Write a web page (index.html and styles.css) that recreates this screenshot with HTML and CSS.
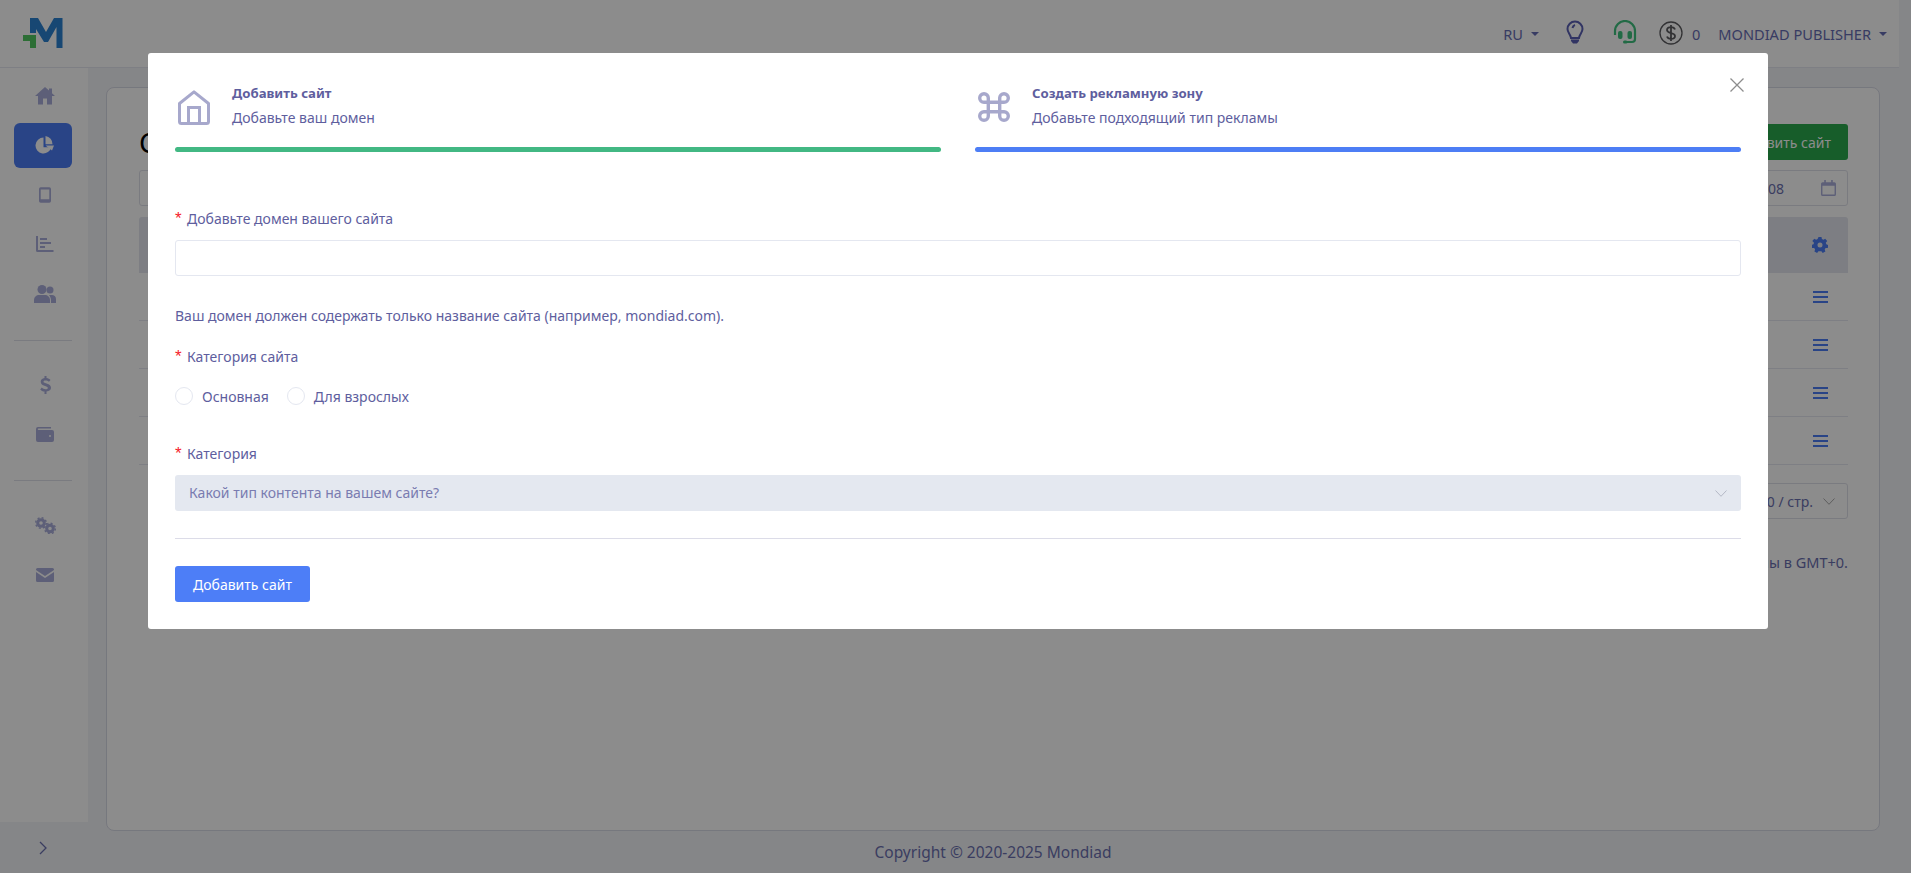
FILE: index.html
```html
<!DOCTYPE html>
<html lang="ru">
<head>
<meta charset="utf-8">
<title>Mondiad</title>
<link rel="stylesheet" href="styles.css">
</head>
<body>
<div class="app">
  <header class="topbar">
    <svg class="logo" viewBox="0 0 40 31" width="40" height="31">
      <path class="logo-m" d="M7 0h8l8 14 8-14h8.500v30h-6V9L25 24h-4L13 11v4H7z"/>
      <path class="logo-plus" d="M0 17h13v13H7v-7H0z"/>
    </svg>
    <div class="top-actions">
      <span class="top-item">RU<i class="caret"></i></span>
      <svg class="top-icon bulb" viewBox="0 0 18 24" width="18" height="24"><path d="M9 1.500a7.500 7.500 0 0 0-7.500 7.500c0 3.500 3 5 3.500 9h8c.5-4 3.500-5.500 3.500-9A7.500 7.500 0 0 0 9 1.500zM9 5a4 4 0 0 0-2.500 3" fill="none" stroke="currentColor" stroke-width="2"/><path d="M5 19.500h8v1.500l-2 2.500H7L5 21z" fill="currentColor"/></svg>
      <svg class="top-icon headset" viewBox="0 0 24 24" width="24" height="24"><path d="M2 15V11a10 10 0 0 1 20 0v8c0 2-1.500 3-3 3h-6" fill="none" stroke="currentColor" stroke-width="2.200"/><rect x="5" y="11" width="4.500" height="8" rx="2" fill="currentColor"/><rect x="14.500" y="11" width="4.500" height="8" rx="2" fill="currentColor"/><rect x="10" y="20.500" width="4.500" height="3" rx="1.500" fill="currentColor"/></svg>
      <span class="balance">
        <svg class="coin" viewBox="0 0 24 24" width="24" height="24"><circle cx="12" cy="12" r="11" fill="none" stroke="currentColor" stroke-width="1.300"/><path d="M16 8.500c-.5-1.500-2-2.300-4-2.300-2.300 0-4 1.100-4 2.900 0 4 8 2 8 5.800 0 1.800-1.700 2.900-4 2.900-2 0-3.500-.8-4-2.300M12 4v16" fill="none" stroke="currentColor" stroke-width="1.800"/></svg>
        0
      </span>
      <span class="top-item user">MONDIAD PUBLISHER<i class="caret"></i></span>
    </div>
  </header>
  <div class="below">
    <aside class="sidebar">
      <nav class="side-nav">
        <a class="side-link"><svg viewBox="0 0 20 18" width="20" height="18"><path d="M10 0L0 9h3v8.500h5V11.500h4v6h5V9h3l-3-2.700V1.500h-3v2.100z"/></svg></a>
        <a class="side-link active"><svg viewBox="0 0 20 18" width="20" height="18"><path d="M8.500 1.500a8 8 0 1 0 7.800 9.800H8.500z"/><path d="M10.500 0v8.200l7 0A8 8 0 0 0 10.500 0z"/><path d="M10.500 9.500h8.500l-2 5z"/></svg></a>
        <a class="side-link"><svg viewBox="0 0 14 18" width="12" height="16"><path fill-rule="evenodd" d="M2 0h10a2 2 0 0 1 2 2v14a2 2 0 0 1-2 2H2a2 2 0 0 1-2-2V2a2 2 0 0 1 2-2zm0 2.500v11.500h10V2.500z"/></svg></a>
        <a class="side-link"><svg viewBox="0 0 18 16" width="18" height="16"><path d="M0 0h2v14h15.500v2H1.500A1.500 1.500 0 0 1 0 14.500zM4 2h7v2H4zM4 6h11v2H4zM4 10h5v2H4z"/></svg></a>
        <a class="side-link"><svg viewBox="0 0 22 18" width="22" height="18"><circle cx="8" cy="4.500" r="4.500"/><circle cx="16" cy="5" r="3.500"/><path d="M0 18v-3c0-3 2.500-5 5-5h6c2.500 0 5 2 5 5v3z"/><path d="M17 18v-3c0-2-.8-3.500-2-4.800 .5-.2 1-.2 2-.2h1c2 0 4 1.500 4 4v4z"/></svg></a>
        <hr class="side-rule">
        <a class="side-link"><svg viewBox="0 0 11 18" width="11" height="18"><path d="M6.500 0v2c1.800.2 3.200 1 4 2l-1.500 1.800c-1-.8-2.200-1.300-3.500-1.300-1.200 0-2 .5-2 1.300 0 2 7.500 1.200 7.500 6 0 2-1.600 3.400-4.500 3.700V18h-2v-2.400c-1.800-.2-3.300-1-4.300-2.200l1.600-1.800c1 1 2.300 1.700 3.700 1.700 1.500 0 2.300-.6 2.300-1.400C8.300 9.600.7 10.500.7 5.700c0-2 1.500-3.400 3.800-3.700V0z"/></svg></a>
        <a class="side-link"><svg viewBox="0 0 18 15" width="18" height="15"><path d="M2 0h13v1.500H2.500a.7.700 0 0 0 0 1.400H16a2 2 0 0 1 2 2V13a2 2 0 0 1-2 2H2a2 2 0 0 1-2-2V2a2 2 0 0 1 2-2zm12 8a1 1 0 1 0 0 2 1 1 0 0 0 0-2z" fill-rule="evenodd"/></svg></a>
        <hr class="side-rule">
        <a class="side-link"><svg viewBox="0 0 21 17" width="21" height="17"><circle cx="6" cy="6" r="3.300" fill="none" stroke="currentColor" stroke-width="3"/><circle cx="6" cy="6" r="5.300" fill="none" stroke="currentColor" stroke-width="1.500" stroke-dasharray="2 2.160"/><circle cx="15" cy="11.500" r="3.300" fill="none" stroke="currentColor" stroke-width="3"/><circle cx="15" cy="11.500" r="5.300" fill="none" stroke="currentColor" stroke-width="1.500" stroke-dasharray="2 2.160"/></svg></a>
        <a class="side-link"><svg viewBox="0 0 18 14" width="18" height="14"><path d="M1.500 0h15A1.500 1.500 0 0 1 18 1.500v.5L9 8 0 2v-.5A1.500 1.500 0 0 1 1.500 0z"/><path d="M0 4l9 6 9-6v8.500a1.500 1.500 0 0 1-1.500 1.500h-15A1.500 1.500 0 0 1 0 12.500z"/></svg></a>
      </nav>
      <div class="side-toggle"><svg viewBox="0 0 8 14" width="8" height="14"><path d="M1 1l6 6-6 6" fill="none" stroke="currentColor" stroke-width="1.300"/></svg></div>
    </aside>
    <main class="main">
      <section class="card">
        <div class="card-head">
          <h1 class="page-title">Сайты</h1>
          <button class="green-btn">Добавить сайт</button>
        </div>
        <div class="filters">
          <div class="filter-box">2025-08-01 ~ 2025-08-08
            <svg class="cal" viewBox="0 0 14 15" width="15" height="16"><path fill-rule="evenodd" d="M3 0h1.500v2h5V0H11v2h1.500A1.500 1.500 0 0 1 14 3.500v10a1.500 1.500 0 0 1-1.500 1.500h-11A1.500 1.500 0 0 1 0 13.500v-10A1.500 1.500 0 0 1 1.500 2H3zM1.300 5.500v8h11.400v-8z"/></svg>
          </div>
        </div>
        <div class="table">
          <div class="t-head">
            <svg class="gear" viewBox="0 0 16 16" width="16" height="16"><path fill-rule="evenodd" d="M6.500 0h3l.4 2.100 1.500.7L13.200 1.700l2 2.400-1.400 1.600.5 1.500 2 .8-.5 3-2.200.1-.9 1.400.7 2-2.700 1.400-1.300-1.700H8l-1.600 0-1.300 1.700-2.700-1.400.7-2-.9-1.400-2.200-.1-.5-3 2-.8.500-1.500L.3 4.100l2-2.400 1.800 1.100 1.500-.7zM8 5.500a2.500 2.500 0 1 0 0 5 2.500 2.500 0 0 0 0-5z"/></svg>
          </div>
          <div class="t-row"><svg class="menu" viewBox="0 0 15 12" width="15" height="12"><path d="M0 0h15v2H0zM0 5h15v2H0zM0 10h15v2H0z"/></svg></div>
          <div class="t-row"><svg class="menu" viewBox="0 0 15 12" width="15" height="12"><path d="M0 0h15v2H0zM0 5h15v2H0zM0 10h15v2H0z"/></svg></div>
          <div class="t-row"><svg class="menu" viewBox="0 0 15 12" width="15" height="12"><path d="M0 0h15v2H0zM0 5h15v2H0zM0 10h15v2H0z"/></svg></div>
          <div class="t-row"><svg class="menu" viewBox="0 0 15 12" width="15" height="12"><path d="M0 0h15v2H0zM0 5h15v2H0zM0 10h15v2H0z"/></svg></div>
        </div>
        <div class="pager">
          <div class="page-size">10 / стр.<svg class="chev" viewBox="0 0 12 7" width="12" height="7"><path d="M.5.500L6 6.300 11.500.500" fill="none" stroke="currentColor"/></svg></div>
        </div>
        <p class="note">Все данные показаны в GMT+0.</p>
      </section>
      <footer class="footer">Copyright © 2020-2025 Mondiad</footer>
    </main>
  </div>
</div>

<div class="overlay">
  <div class="modal">
    <svg class="close" viewBox="0 0 14 14" width="14" height="14"><path d="M.5.500l13 13M13.500.500l-13 13" fill="none" stroke="currentColor" stroke-width="1.300"/></svg>
    <div class="steps">
      <div class="step">
        <div class="step-head">
          <div class="step-icon">
            <svg class="icon-house" viewBox="0 0 32 35" width="32" height="35"><path d="M16 1.800L1.500 13.500V31.500a2 2 0 0 0 2 2h25a2 2 0 0 0 2-2V13.500z" fill="none" stroke="currentColor" stroke-width="3" stroke-linejoin="round"/><path d="M10.500 33V17.500h11V33" fill="none" stroke="currentColor" stroke-width="3"/></svg>
          </div>
          <div class="step-text">
            <div class="step-title">Добавить сайт</div>
            <div class="step-sub">Добавьте ваш домен</div>
          </div>
        </div>
        <div class="bar bar-green"></div>
      </div>
      <div class="step">
        <div class="step-head">
          <div class="step-icon">
            <svg class="icon-cmd" viewBox="0 0 32 30" width="32" height="30"><path d="M10.300 10.300V6A4.300 4.300 0 1 0 6 10.300H26A4.300 4.300 0 1 0 21.700 6V24A4.300 4.300 0 1 0 26 19.700H6A4.300 4.300 0 1 0 10.300 24Z" fill="none" stroke="currentColor" stroke-width="3.400"/></svg>
          </div>
          <div class="step-text">
            <div class="step-title">Создать рекламную зону</div>
            <div class="step-sub">Добавьте подходящий тип рекламы</div>
          </div>
        </div>
        <div class="bar bar-blue"></div>
      </div>
    </div>
    <form class="form">
      <label class="label"><span class="req">*</span>Добавьте домен вашего сайта</label>
      <input class="input" type="text">
      <p class="hint">Ваш домен должен содержать только название сайта (например, mondiad.com).</p>
      <label class="label label-cat"><span class="req">*</span>Категория сайта</label>
      <div class="radios">
        <span class="radio"><i class="dot"></i>Основная</span>
        <span class="radio"><i class="dot"></i>Для взрослых</span>
      </div>
      <label class="label label-sel"><span class="req">*</span>Категория</label>
      <div class="select"><span class="select-text">Какой тип контента на вашем сайте?</span>
        <svg class="chev" viewBox="0 0 12 7" width="12" height="7"><path d="M.5.500L6 6.300 11.500.500" fill="none" stroke="currentColor"/></svg>
      </div>
      <hr class="rule">
      <button class="submit" type="button">Добавить сайт</button>
    </form>
  </div>
</div>
</body>
</html>
```
FILE: styles.css
```css
* { box-sizing: border-box; }
html, body { margin: 0; height: 100%; overflow: hidden; }
body {
  background: #f3f4f8;
  font-family: "Noto Sans", "Liberation Sans", sans-serif;
  font-size: 14px;
  color: #5e5e9e;
}
svg { display: block; fill: currentColor; }

.app { height: 873px; display: flex; flex-direction: column; }
.topbar {
  height: 68px;
  margin-right: 12px;
  background: #fff;
  border-bottom: 1px solid #e6e8f0;
  display: flex;
  align-items: center;
  justify-content: space-between;
  padding: 0 12px 0 23px;
  flex: none;
}
.logo { margin-top: -1px; }
.logo-m { fill: #2b82d2; }
.logo-plus { fill: #50c862; }
.top-actions { display: flex; align-items: center; color: #676db4; }
.top-item { display: flex; align-items: center; font-size: 14.600px; }
.caret {
  width: 0; height: 0;
  margin-left: 8px;
  border: 4px solid transparent;
  border-top-color: currentColor;
  border-bottom: 0;
}
.top-icon { flex: none; }
.bulb { margin-left: 27px; color: #5a5fb4; margin-top: -4px; }
.headset { margin-left: 29px; color: #3fc27f; margin-top: -4px; }
.balance { margin-left: 22px; display: flex; align-items: center; gap: 9px; font-size: 14.600px; }
.coin { color: #5c5c60; margin-top: -1px; }
.user { margin-left: 18px; }

.below { flex: 1; display: flex; min-height: 0; }
.sidebar { width: 88px; flex: none; display: flex; flex-direction: column; }
.side-nav {
  height: 754px;
  background: #fff;
  padding: 5px 16px 0 14px;
  display: flex;
  flex-direction: column;
  color: #aaaeda;
}
.side-link {
  height: 45px;
  margin-bottom: 4.500px;
  display: flex;
  align-items: center;
  justify-content: center;
  padding-left: 4px;
  border-radius: 6px;
  flex: none;
}
.side-link.active { background: #4c7df5; color: #fff; }
.side-rule { width: 100%; margin: 19px 0 21.500px; border: 0; border-top: 1px solid #dfe1ea; flex: none; }
.side-toggle { flex: 1; display: flex; align-items: center; justify-content: center; padding: 0 3px 0 0; color: #6b70b0; }

.main { flex: 1; min-width: 0; padding: 19px 31px 0 18px; display: flex; flex-direction: column; }
.card {
  height: 744px;
  flex: none;
  background: #fff;
  border: 1px solid #d8dae6;
  border-radius: 8px;
  padding: 36px 31px 0 32px;
}
.card-head { height: 36px; display: flex; align-items: center; justify-content: space-between; }
.page-title { margin: 0; font-size: 28px; font-weight: 400; color: #000; }
.green-btn {
  height: 36px; padding: 0 17px;
  border: 0; border-radius: 3px;
  background: #2aa94d; color: #fff;
  font: inherit;
}
.filters { margin-top: 10px; }
.filter-box {
  height: 36px;
  border: 1px solid #dfe1ea;
  border-radius: 3px;
  display: flex; align-items: center; justify-content: flex-end;
  gap: 37px; padding: 0 11px 0 14px;
  font-size: 14px; color: #6b70b0;
}
.cal { color: #aaaeda; }
.table { margin-top: 11px; }
.t-head {
  height: 56px;
  background: #e3e6ee;
  border-radius: 3px 3px 0 0;
  display: flex; align-items: center; justify-content: flex-end;
  padding-right: 20px;
  color: #4c7df5;
}
.t-row {
  height: 48px;
  border-bottom: 1px solid #e6e8f0;
  display: flex; align-items: center; justify-content: flex-end;
  padding-right: 20px;
  color: #4c7df5;
}
.pager { margin-top: 18px; display: flex; justify-content: flex-end; }
.page-size {
  height: 36px;
  border: 1px solid #dfe1ea; border-radius: 3px;
  display: flex; align-items: center; gap: 10px;
  padding: 0 12px;
  font-size: 14px; color: #6b70b0;
}
.page-size .chev { color: #aaa; }
.note { margin: 33px 0 0; text-align: right; font-size: 14.500px; color: #6b70b0; }
.footer { flex: 1; display: flex; align-items: center; justify-content: center; font-size: 15.500px; color: #6b70b0; }

.overlay {
  position: fixed; inset: 0;
  background: rgba(0, 0, 0, .45);
  display: flex; justify-content: center; align-items: flex-start;
  padding: 53px 0 0 5px;
}
.modal {
  position: relative;
  width: 1620px; height: 576px;
  background: #fff;
  border-radius: 3px;
  padding: 27px;
}
.close { position: absolute; top: 25px; right: 24px; color: #8d8d8d; }
.steps { display: grid; grid-template-columns: 1fr 1fr; gap: 34px; }
.step-head { height: 67px; display: flex; }
.step-icon { flex: none; width: 36px; padding-left: 3px; color: #a7a8cc; }
.icon-house { margin-top: 10px; }
.icon-cmd { margin-top: 12px; }
.step-text { margin-left: 21px; padding-top: 4px; }
.step-title { font-weight: 700; font-size: 13.200px; line-height: 18px; }
.step-sub { line-height: 18px; margin-top: 7px; }
.bar { height: 5px; border-radius: 3px; }
.bar-green { background: #42b883; }
.bar-blue { background: #4d7ef5; }
.form { display: block; margin-top: 58px; }
.label { display: flex; align-items: center; height: 18px; line-height: 18px; }
.req { color: #f5222d; width: 12px; font-family: "Liberation Sans", sans-serif; font-size: 17px; flex: none; }
.input {
  display: block; width: 100%; height: 36px;
  margin-top: 12px;
  border: 1px solid #e4e7f0; border-radius: 3px;
  background: #fff; outline: 0;
}
.hint { margin: 31px 0 0; line-height: 18px; }
.label-cat { margin-top: 23px; }
.radios { display: flex; margin-top: 21px; height: 18px; align-items: center; gap: 18px; }
.radio { display: flex; align-items: center; gap: 9px; }
.dot { width: 18px; height: 18px; border: 1px solid #e4e7f0; border-radius: 50%; }
.label-sel { margin-top: 40px; }
.select {
  height: 36px; margin-top: 12px;
  background: #e4e8f0; border-radius: 3px;
  display: flex; align-items: center; justify-content: space-between;
  padding: 0 14px;
  color: #7a7cb0;
}
.select-text { padding-bottom: 2px; }
.select .chev { color: #b4b8c6; }
.rule { margin: 27px 0 0; border: 0; border-top: 1px solid #dcdce8; }
.submit {
  display: block; margin-top: 27px;
  width: 135px; height: 36px;
  border: 0; border-radius: 3px;
  background: #4d7ef7; color: #fff;
  font: inherit;
}
```
